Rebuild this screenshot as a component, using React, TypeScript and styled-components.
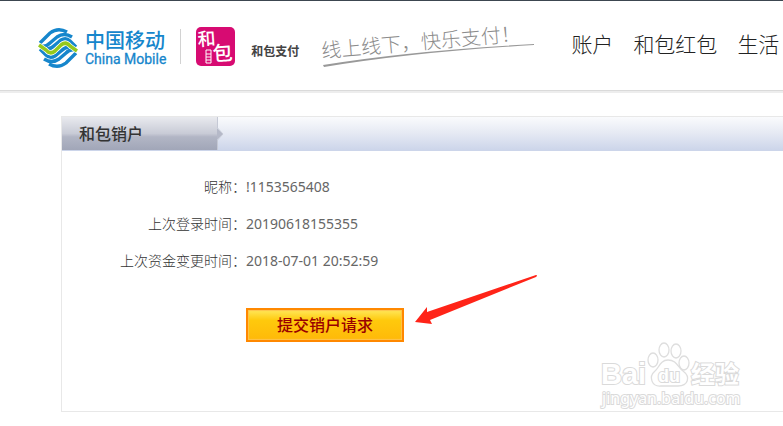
import React from "react";
import styled, { createGlobalStyle } from "styled-components";

const sans = `"Noto Sans", "Noto Sans CJK SC", sans-serif`;
const cjk = `"Noto Sans CJK SC", sans-serif`;

const GlobalStyle = createGlobalStyle`
  *, *::before, *::after { box-sizing: border-box; }
  html { overflow: hidden; }
  body { margin: 0; background: #fff; color: #666; font-family: ${sans}; }
`;

const Header = styled.header`
  display: flex;
  align-items: flex-start;
  height: 93px;
  padding-left: 38px;
  border-top: 1px solid #3c4650;
  border-bottom: 2px solid #ededed;
  box-shadow: inset 0 -1px 0 #dadada;
  overflow: hidden;
  white-space: nowrap;
`;

const Carrier = styled.a`
  display: flex;
  align-items: center;
  gap: 7px;
  height: 60px;
  margin-top: 17px;
  padding-right: 14px;
  color: #1686cc;
  text-decoration: none;
`;

const CarrierNames = styled.span`
  display: flex;
  flex-direction: column;
  gap: 1px;
`;

const CarrierName = styled.span`
  font: 500 20px/20px ${cjk};
`;

const CarrierLatin = styled.span`
  -webkit-text-stroke: 0.3px #1686cc;
  font: 400 14px/16px Roboto, sans-serif;
`;

const Product = styled.a`
  display: flex;
  align-items: center;
  gap: 16px;
  height: 35px;
  margin-top: 28px;
  padding-left: 15px;
  border-left: 1px solid #d2d2d2;
  color: #444;
  font: 700 12px/20px ${cjk};
  text-decoration: none;
`;

const ProductName = styled.span`
  padding-top: 9px;
`;

const Slogan = styled.svg`
  flex: none;
  margin: 14px 0 0 19px;
  overflow: visible;
`;

const Nav = styled.nav`
  display: flex;
  flex: none;
  gap: 20px;
  margin: 26px 0 0 33px;
`;

const NavLink = styled.a`
  color: #222;
  font: 300 21px/32px ${cjk};
  text-decoration: none;
`;

const Panel = styled.section`
  position: relative;
  margin: 23px 0 14px 61px;
  min-height: 296px;
  border: 1px solid #e8e8e8;
  border-right: 0;
`;

const TitleBar = styled.div`
  display: flex;
  height: 34px;
  border-bottom: 1px solid #ccd5ea;
  background: linear-gradient(#fafbfd, #e5e9f3 50%, #ccd5ea);
`;

const Title = styled.h1`
  width: 155px;
  margin: 0;
  padding-left: 17px;
  background: linear-gradient(#e9eaef, #c8cbd6 50%, #b2b6c5 60%, #a1a6b8);
  color: #333;
  font: 500 16px/32px ${cjk};
`;

const Details = styled.dl`
  display: grid;
  grid-template-columns: 184px 1fr;
  row-gap: 17px;
  margin: 26px 0 0;
  font-size: 14px;
  line-height: 20px;
`;

const Label = styled.dt`
  font-family: ${cjk};
  font-weight: 300;
  line-height: 18px;
  color: #333;
  text-align: right;
`;

const Value = styled.dd`
  margin: 0;
`;

const Actions = styled.div`
  display: flex;
  margin: 37px 0 0 184px;
`;

const Submit = styled.button`
  width: 158px;
  height: 34px;
  padding: 0 0 2px;
  border: 2px solid #ff8800;
  background: linear-gradient(#ffe85a, #ffc90c 35%, #ffb909);
  box-shadow: inset 0 0 1px 1px #ffc44c;
  color: #990000;
  font: 500 16px/28px ${cjk};
  cursor: pointer;
`;

const Pointer = styled.svg`
  position: absolute;
  top: 156px;
  left: 351px;
`;

const Watermark = styled.svg`
  position: absolute;
  right: 38px;
  bottom: 0;
`;

const details = [
  ["昵称：", "!1153565408"],
  ["上次登录时间：", "20190618155355"],
  ["上次资金变更时间：", "2018-07-01 20:52:59"],
];

function CarrierWaves() {
  return (
    <g stroke="#1686cc" strokeWidth="3.4">
      <path d="M2 15L12 5Q20 -1 29 4" />
      <path d="M4 18Q8 19 12 15L19 9Q26 4 34 9" />
      <path d="M9 21Q13 21 17 17L23 12Q28 9 32 13L38 19" />
    </g>
  );
}

function CarrierMark() {
  return (
    <svg width="40" height="40" viewBox="0 0 40 40" fill="none" aria-hidden="true">
      <CarrierWaves />
      <g transform="rotate(180 20 20)">
        <CarrierWaves />
      </g>
      <path
        d="M1 17L8 22Q12 27 17 23L23 17Q28 13 32 18L39 23"
        stroke="#fff"
        strokeWidth="5"
      />
      <path
        d="M1 17L8 22Q12 27 17 23L23 17Q28 13 32 18L39 23"
        stroke="#95c91d"
        strokeWidth="3.6"
      />
    </svg>
  );
}

function ProductMark() {
  return (
    <svg width="39" height="39" viewBox="0 0 39 39" overflow="visible" aria-hidden="true">
      <rect width="39" height="39" rx="5" fill="#d70b72" />
      <g fill="#fff" fontFamily="Noto Sans CJK SC" fontWeight="500">
        <text x="2" y="19" fontSize="18" transform="rotate(-4 2 19)">和</text>
        <text x="17" y="34" fontSize="20" transform="rotate(-4 17 34)">包</text>
      </g>
      <g fill="none" stroke="#fff">
        <path d="M10 23H15V36H10ZM10 27H15M10 30H15M10 33H15" />
      </g>
    </svg>
  );
}

export default function App() {
  return (
    <>
      <GlobalStyle />
      <Header>
        <Carrier href="#">
          <CarrierMark />
          <CarrierNames>
            <CarrierName>中国移动</CarrierName>
            <CarrierLatin>China Mobile</CarrierLatin>
          </CarrierNames>
        </Carrier>
        <Product href="#">
          <ProductMark />
          <ProductName>和包支付</ProductName>
        </Product>
        <Slogan width="220" height="60" viewBox="0 0 220 60">
          <text
            x="4"
            y="43"
            fontSize="20"
            fontWeight="300"
            fill="#8c8c8c"
            fontFamily="Noto Sans CJK SC"
            transform="rotate(-5 4 43)"
          >
            线上线下，快乐支付！
          </text>
          <path d="M5 50Q90 36 216 29V30Q96 37 6 52Z" fill="#999" />
        </Slogan>
        <Nav>
          <NavLink href="#">账户</NavLink>
          <NavLink href="#">和包红包</NavLink>
          <NavLink href="#">生活</NavLink>
        </Nav>
      </Header>
      <Panel>
        <TitleBar>
          <Title>和包销户</Title>
          <svg width="8" height="33" viewBox="0 0 8 33" aria-hidden="true">
            <path d="M0 0V11L6 17L0 23V33" fill="#b5b9c8" />
            <path d="M.5 0V11L6 17L.5 23V33" fill="none" stroke="#c5c9d5" />
          </svg>
        </TitleBar>
        <Details>
          {details.map(([label, value]) => (
            <React.Fragment key={label}>
              <Label>{label}</Label>
              <Value>{value}</Value>
            </React.Fragment>
          ))}
        </Details>
        <Actions>
          <Submit type="button">提交销户请求</Submit>
        </Actions>
        <Pointer width="126" height="52" viewBox="0 0 126 52" aria-hidden="true">
          <path d="M2 49L14 34L14 39L123 2Q125 2 123 4L17 47L19 51Z" fill="#ff2418" />
        </Pointer>
        <Watermark width="146" height="72" viewBox="0 0 146 72">
          <g fill="#fff" stroke="#dedede" strokeWidth="1.3">
            <ellipse cx="54" cy="21" rx="5" ry="7" />
            <ellipse cx="65" cy="11" rx="5" ry="7" />
            <ellipse cx="77" cy="12" rx="5" ry="7" />
            <ellipse cx="85" cy="24" rx="5" ry="7" />
            <path d="M69 21C61 21 60 29 56 32C49 38 53 48 62 47L79 47C89 47 92 38 84 32C79 29 78 21 69 21Z" />
          </g>
          <g fill="#fff" stroke="#dadada" strokeWidth="2" paintOrder="stroke" fontWeight="700">
            <text x="2" y="45" fontSize="29" fontFamily="Liberation Sans">Bai</text>
            <text x="59" y="43" fontSize="18" fontFamily="Liberation Sans">du</text>
            <text x="92" y="44" fontSize="24" fontFamily="Noto Sans CJK SC">经验</text>
            <text x="3" y="65" fontSize="16" fontFamily="Noto Sans" fontWeight="400">
              jingyan.baidu.com
            </text>
          </g>
        </Watermark>
      </Panel>
    </>
  );
}
